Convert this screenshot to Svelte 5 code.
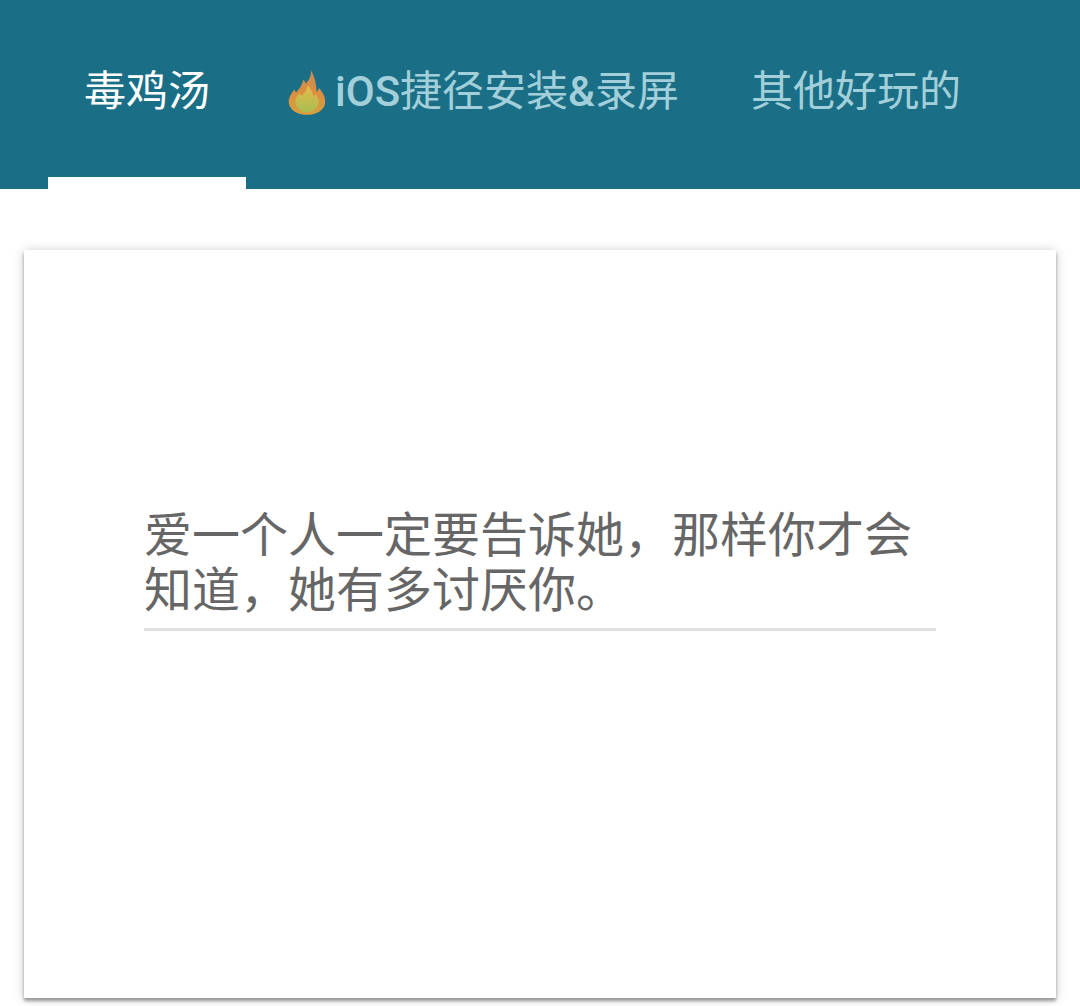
<script>
  const tabs = [
    { label: '毒鸡汤', active: true },
    { label: 'iOS捷径安装&录屏', hot: true },
    { label: '其他好玩的' }
  ];
  const quote = '爱一个人一定要告诉她，那样你才会知道，她有多讨厌你。';
  // latin runs sit a bit heavier than the CJK around them
  const runs = (label) => label.split(/([A-Za-z&]+)/).filter(Boolean);
</script>

<div class="page">
  <nav class="tabs">
    {#each tabs as tab}
      <div class="tab" class:active={tab.active}>
        {#if tab.hot}
          <svg class="flame" viewBox="0 0 40 48" aria-hidden="true">
            <defs>
              <linearGradient id="outer" x1="0" y1="0" x2="0" y2="1">
                <stop offset="0" stop-color="#c98a52" />
                <stop offset="0.55" stop-color="#dd8f3e" />
                <stop offset="1" stop-color="#d6a03e" />
              </linearGradient>
              <linearGradient id="inner" x1="0" y1="0" x2="0" y2="1">
                <stop offset="0" stop-color="#e6b94c" />
                <stop offset="1" stop-color="#a8bf52" />
              </linearGradient>
            </defs>
            <path fill="url(#outer)" d="M24 1c1 6-2 10-5 14-1-2-2-3-3-4-1 6-4 9-7 13-1 0-2-1-2-3-4 5-7 10-6 15 1 7 9 12 19 12s18-5 19-12c1-7-3-12-6-16-1 1-2 3-3 4 0-8-2-17-6-23z" />
            <path fill="url(#inner)" d="M21 17c-1 5-4 8-6 11-2-1-2-2-3-3-3 4-5 7-4 11 1 5 6 9 12 9s11-4 12-9c1-4-1-7-3-10-1 1-1 2-2 3-1-4-3-8-6-12z" />
          </svg>
        {/if}
        <span>{#each runs(tab.label) as run}<span class:latin={/[A-Za-z&]/.test(run)}>{run}</span>{/each}</span>
      </div>
    {/each}
  </nav>

  <main class="content">
    <section class="card">
      <p class="quote">{quote}</p>
    </section>
  </main>
</div>

<style>
  :global(body) {
    margin: 0;
    background: #fff;
    font-family: Roboto, "Noto Sans CJK SC", sans-serif;
  }
  .page {
    height: 1006px;
    display: flex;
    flex-direction: column;
    overflow: hidden;
  }
  .tabs {
    height: 189px;
    flex: none;
    display: flex;
    padding-left: 48px;
    box-sizing: border-box;
    background: #1a6f86;
  }
  .tab {
    display: flex;
    align-items: center;
    padding: 0 36px 2px;
    height: 100%;
    box-sizing: border-box;
    font-size: 42px;
    color: #a3cfda;
    border-bottom: 12px solid transparent;
  }
  .tab.active {
    color: #fff;
    border-bottom-color: #fff;
  }
  .latin {
    font-weight: 500;
  }
  .flame {
    width: 38px;
    height: 46px;
    margin: 8px 9px 0 6px;
  }
  .content {
    flex: 1;
    padding: 61px 24px 8px;
    display: flex;
    min-height: 0;
  }
  .card {
    flex: 1;
    display: flex;
    flex-direction: column;
    justify-content: center;
    padding: 0 120px 110px;
    background: #fff;
    box-shadow: 0 3px 3px rgba(0, 0, 0, 0.34), 0 1px 11px rgba(0, 0, 0, 0.2);
  }
  .quote {
    margin: 0;
    padding: 0 0 10px;
    font-size: 48px;
    line-height: 55px;
    color: #666;
    border-bottom: 3px solid #e0e0e0;
  }
</style>
